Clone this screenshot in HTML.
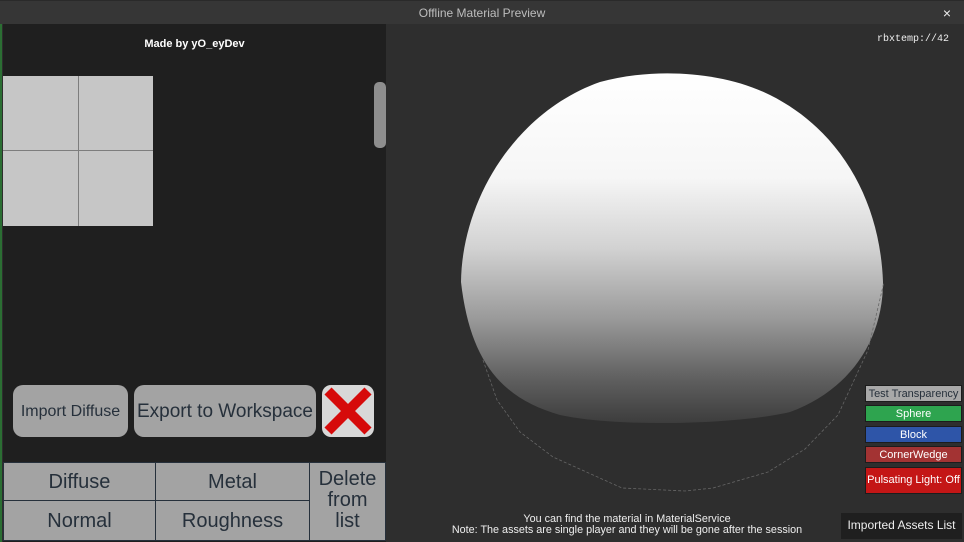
<!DOCTYPE html>
<html><head><meta charset="utf-8"><style>
*{margin:0;padding:0;box-sizing:border-box}
body{width:964px;height:542px;background:#2e2e2e;position:relative;overflow:hidden;font-family:"Liberation Sans",sans-serif}
.abs{position:absolute}
.title{left:0;top:0;width:964px;height:24px;background:#363636;border-top:1px solid #2a2a2a;color:#bdbdbd;font-size:12px;text-align:center;line-height:24px}
.left{left:3px;top:24px;width:383px;height:518px;background:#1f1f1f}
.btn{background:#a3a3a3;border-radius:10px;color:#26303b;text-align:center}
.cell{background:#a3a3a3;color:#26303b;text-align:center;font-size:20px;border:1px solid #26303b}
.rb{color:#fff;font-size:11px;text-align:center;line-height:16px;height:17px;left:865px;width:97px;border:1px solid #1c1c1c}
</style></head><body>
<div class="abs" style="left:0;top:24px;width:2px;height:518px;background:#2b6e33"></div>
<div class="abs title">Offline Material Preview<span style="position:absolute;right:13px;top:0;color:#eee;font-size:14px">×</span></div>
<div class="abs left"></div>
<div class="abs" style="left:3px;top:38px;width:383px;text-align:center;color:#fff;font-size:11px;font-weight:bold">Made by yO_eyDev</div>
<div class="abs" style="left:3px;top:76px;width:150px;height:150px;background:#c6c6c6"></div>
<div class="abs" style="left:78px;top:76px;width:1px;height:150px;background:#7d7d7d"></div>
<div class="abs" style="left:3px;top:150px;width:150px;height:1px;background:#7d7d7d"></div>
<div class="abs" style="left:374px;top:82px;width:12px;height:66px;background:#8e8e8e;border-radius:5px"></div>
<div class="abs btn" style="left:13px;top:385px;width:115px;height:52px;line-height:54px;font-size:16px">Import Diffuse</div>
<div class="abs btn" style="left:134px;top:385px;width:182px;height:52px;line-height:53px;font-size:19px">Export to Workspace</div>
<div class="abs" style="left:322px;top:385px;width:52px;height:52px;background:#d8d8d8;border-radius:9px;overflow:hidden">
<svg width="52" height="52"><path d="M6 6L46 46M46 6L6 46" stroke="#d60a0a" stroke-width="10"/></svg></div>
<div class="abs cell" style="left:3px;top:462px;width:153px;height:39px;line-height:38px">Diffuse</div>
<div class="abs cell" style="left:155px;top:462px;width:155px;height:39px;line-height:38px">Metal</div>
<div class="abs cell" style="left:3px;top:500px;width:153px;height:41px;line-height:40px">Normal</div>
<div class="abs cell" style="left:155px;top:500px;width:155px;height:41px;line-height:40px">Roughness</div>
<div class="abs cell" style="left:309px;top:462px;width:77px;height:79px;line-height:21px;padding-top:6px">Delete<br>from<br>list</div>
<div class="abs" style="left:877px;top:34px;color:#eee;font-family:'Liberation Mono',monospace;font-size:10px">rbxtemp://42</div>
<svg class="abs" style="left:0;top:0" width="964" height="542">
<defs><linearGradient id="g" x1="0" y1="72" x2="0" y2="424" gradientUnits="userSpaceOnUse">
<stop offset="0" stop-color="#fff"/><stop offset="0.3" stop-color="#f6f6f6"/><stop offset="0.5" stop-color="#d2d2d2"/><stop offset="0.7" stop-color="#9a9a9a"/><stop offset="0.87" stop-color="#606060"/><stop offset="1" stop-color="#3c3c3c"/></linearGradient></defs>
<path fill="url(#g)" d="M461,282 C462,200 515,112 600,82 C650,68 720,70 770,95 C840,130 880,200 883,282 C883,340 850,390 790,412 C740,424 620,428 560,415 C500,398 470,360 461,282Z"/>
<polyline fill="none" stroke="#666" stroke-width="0.8" stroke-dasharray="3,2" points="483,360 497,400 520,432 553,457 622,488 685,491 713,488 768,472 805,449 838,415 868,350 884,282"/>
</svg>
<div class="abs rb" style="top:385px;background:#a8a8a8;color:#26303b">Test Transparency</div>
<div class="abs rb" style="top:405px;background:#2ea44f">Sphere</div>
<div class="abs rb" style="top:426px;background:#2e55a8">Block</div>
<div class="abs rb" style="top:446px;background:#a33333">CornerWedge</div>
<div class="abs rb" style="top:467px;height:27px;line-height:25px;background:#c41616">Pulsating Light: Off</div>
<div class="abs" style="left:841px;top:513px;width:121px;height:26px;background:#1f1f1f;color:#eee;font-size:12px;line-height:25px;text-align:center">Imported Assets List</div>
<div class="abs" style="left:397px;top:514px;width:460px;text-align:center;color:#eee;font-size:10.8px;line-height:11px">You can find the material in MaterialService<br>Note: The assets are single player and they will be gone after the session</div>
</body></html>
